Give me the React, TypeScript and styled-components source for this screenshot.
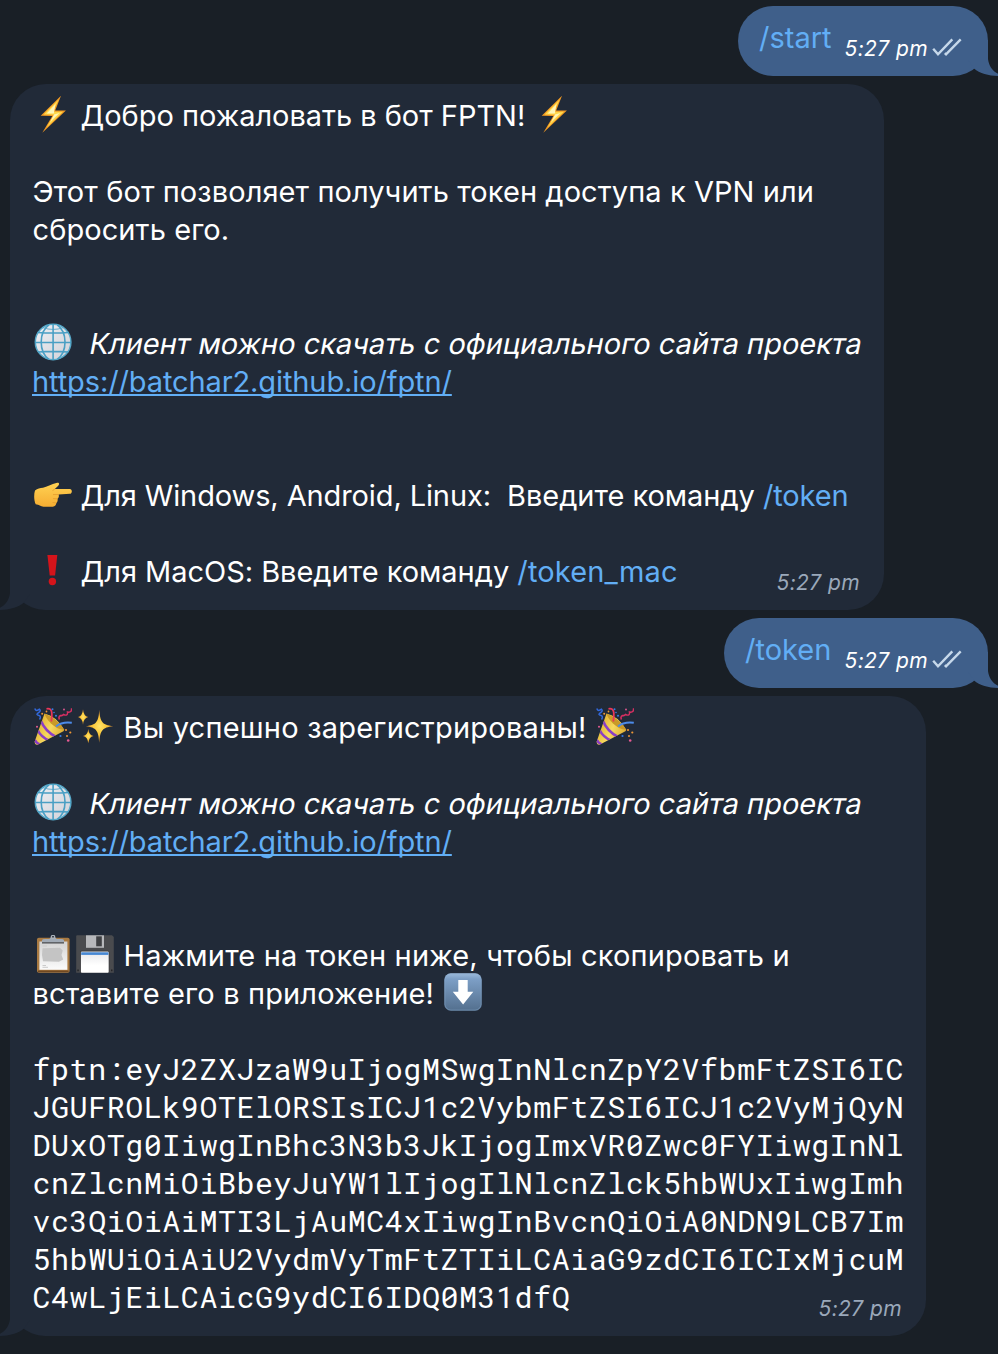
import React from 'react';
import styled, { createGlobalStyle } from 'styled-components';

const GlobalStyle = createGlobalStyle`
  body {
    margin: 0;
    background: #191f26;
  }
`;

const Chat = styled.main`
  box-sizing: border-box;
  display: flex;
  flex-direction: column;
  gap: 8px;
  width: 998px;
  height: 1354px;
  padding: 6px 10px 0;
  overflow: hidden;
  background: #191f26;
  color: #ffffff;
  font: 400 29px/38px Inter, 'Liberation Sans', sans-serif;
`;

const Incoming = styled.article<{ $width: number }>`
  position: relative;
  box-sizing: border-box;
  align-self: flex-start;
  width: ${(p) => p.$width}px;
  padding: 12px 22px 20px;
  border-radius: 36px 36px 36px 35px;
  background: #212a38;
`;

const Outgoing = styled.article<{ $width: number }>`
  position: relative;
  box-sizing: border-box;
  align-self: flex-end;
  display: flex;
  justify-content: space-between;
  width: ${(p) => p.$width}px;
  height: 70px;
  padding: 12px 26px 0 21px;
  border-radius: 35px;
  background: #3f5f8a;
`;

const TailShape = styled.svg<{ $side: 'left' | 'right' }>`
  position: absolute;
  bottom: 0;
  ${(p) => p.$side}: -12px;
  width: 40px;
  height: 36px;
  transform: ${(p) => (p.$side === 'left' ? 'scaleX(-1)' : 'none')};
`;

const Line = styled.div`
  position: relative;
  display: flex;
  height: 38px;
  white-space: pre;
`;

const Run = styled.span<{ $tracking?: number; $before?: number }>`
  margin-left: ${(p) => p.$before ?? 0}px;
  letter-spacing: ${(p) => p.$tracking ?? 0}px;
  line-height: 40px;
`;

const SlantedRun = styled(Run)`
  height: 40px;
  transform: skewX(-11deg);
  transform-origin: 0 30px;
`;

const Command = styled(Run)`
  color: #62aef5;
`;

const Link = styled.a`
  color: #62aef5;
  line-height: 40px;
  letter-spacing: -0.11px;
  text-decoration: underline;
  text-decoration-thickness: 2px;
  text-underline-offset: 2px;
  text-decoration-skip-ink: none;
`;

const Token = styled.code`
  display: block;
  margin-left: 0.5px;
  font: 400 30px/38px 'Roboto Mono', 'DejaVu Sans Mono', monospace;
  letter-spacing: 0.54px;
  white-space: pre;
`;

const Emoji = styled.svg<{ $before?: number }>`
  flex: none;
  width: 38px;
  height: 38px;
  margin: -1px 1.5px 0 ${(p) => p.$before ?? 2}px;
`;

const Time = styled.time`
  font-size: 21px;
  line-height: 26px;
  font-style: italic;
  letter-spacing: 0.4px;
  white-space: pre;
`;

const CornerTime = styled(Time)`
  position: absolute;
  right: 24px;
  bottom: 14px;
  color: #9aa8ba;
`;

const Status = styled.div`
  display: flex;
  align-items: flex-start;
  gap: 4px;
  padding-top: 18px;
`;

const Ticks = styled.svg`
  width: 30px;
  height: 19px;
  margin-top: 2px;
`;

function Tail({ side, color }: { side: 'left' | 'right'; color: string }) {
  return (
    <TailShape $side={side} viewBox="0 0 40 36" aria-hidden="true">
      <path d="M28 0V19C28.8 26 33 32 40 34.8V35.9C30 36 20 34 14 28.5L8 20V0Z" fill={color} />
    </TailShape>
  );
}

function Bolt({ before }: { before?: number }) {
  return (
    <Emoji $before={before} viewBox="0 0 38 38" aria-label="⚡">
      <path d="M27 .7 6.7 20.7 18.3 21 8.3 37.7 31.9 15.5 21.2 15.5Z" fill="#f39a22" />
      <path d="M24.8 4.2 9.6 19.5 20.2 19.7 12.5 32.6 29 16.8 19 16.7Z" fill="#ffd84b" />
      <path d="M21.5 9 12.7 18.5 19.8 18.6ZM20 19.5 16 27 25.5 18Z" fill="#fff6b8" />
    </Emoji>
  );
}

function Globe() {
  return (
    <Emoji viewBox="0 0 38 38" aria-label="🌐">
      <defs>
        <linearGradient id="globe" x1="0" y1="0" x2="1" y2="1">
          <stop offset="0" stopColor="#f0f0f4" />
          <stop offset="1" stopColor="#cfd1d8" />
        </linearGradient>
      </defs>
      <circle cx="19.1" cy="19" r="17.8" fill="url(#globe)" stroke="#57a9c9" strokeWidth="1.5" />
      <g fill="none" stroke="#4a9fc4" strokeWidth="1.6">
        <path d="M19.1 1V37M1 19.5H37M3.5 9.5Q19 10.5 34.7 9.5M4 29Q19 27.7 34.3 29" />
        <path d="M15 1.8C4.6 9 4.6 29 15 36.3M23.2 1.8C33.6 9 33.6 29 23.2 36.3" />
        <path d="M9 4.7Q19 8.2 29.2 4.7" strokeWidth=".8" />
      </g>
    </Emoji>
  );
}

function PointRight() {
  return (
    <Emoji viewBox="0 0 38 38" aria-label="👉">
      <defs>
        <linearGradient id="hand" x1="0" y1="0" x2="0" y2="1">
          <stop offset="0" stopColor="#ffd253" />
          <stop offset="1" stopColor="#f6ad32" />
        </linearGradient>
      </defs>
      <path
        d="M1 15.5C3.5 13.8 6 13.2 9 12.8C13 11.8 17 9.5 23.2 7.8C25.6 7.6 25.5 9.8 24 11L20.8 14.1H35.8C38.5 14.2 38.5 18.5 35.8 18.8L24.5 19.5C25.3 21 24.8 23 23.5 23.8C24 25.5 23.3 27.3 22.3 27.9C22.4 30 21 31.5 18.8 31.7H9.5C6.5 31.4 5.3 29.8 1.7 29.2C-.2 25 -.2 19.5 1 15.5Z"
        fill="url(#hand)"
      />
      <path d="M24.5 19.5 19 19.6M23.5 23.8 19 23.6M22.3 27.9 18.5 27.5M20.8 14.1 18.5 15.6" fill="none" stroke="#e39c2d" strokeWidth=".8" />
    </Emoji>
  );
}

function Exclamation() {
  return (
    <Emoji viewBox="0 0 38 38" aria-label="❗">
      <path d="M13.4 4H23.3L21.1 24.4H15.7Z" fill="#d4141b" />
      <circle cx="18.4" cy="30.5" r="3.7" fill="#d4141b" />
    </Emoji>
  );
}

function Party({ before }: { before?: number }) {
  return (
    <Emoji $before={before} viewBox="0 0 38 38" aria-label="🎉">
      <defs>
        <linearGradient id="cone" x1="0" y1=".3" x2="1" y2=".8">
          <stop offset="0" stopColor="#d9a521" />
          <stop offset=".45" stopColor="#f7d95f" />
          <stop offset="1" stopColor="#c98f16" />
        </linearGradient>
        <clipPath id="coneEdge">
          <path d="M10.5 6.5Q22 9 30.3 22.7Q30 24.5 27.5 25.3L4 37.5Q.5 38.5.6 34.8Z" />
        </clipPath>
      </defs>
      <g clipPath="url(#coneEdge)">
        <path d="M0 0H38V38H0Z" fill="url(#cone)" />
        <path d="M7 14Q11 24 22 30M3.6 23Q7 30 15 33.5M0 32Q2 36 7 38" fill="none" stroke="#8b3fc4" strokeWidth="2.6" />
        <path d="M10.5 6.5Q24 12 30.3 22.7Q24 23 17 16.5Q11.5 11 10.5 6.5Z" fill="#c99a28" />
      </g>
      <path d="M.8 1.5Q2 5 5.5 2.2Q7.5 4 4 6Q1.5 7.8 5 8.5Q7.5 9.2 5.5 12.5" fill="none" stroke="#3269dc" strokeWidth="1.5" />
      <path d="M12.5 1.8Q17.5.8 17.8 6Q18 10 17.3 14.5" fill="none" stroke="#ea3658" strokeWidth="1.8" />
      <path d="M37.5 1.2Q38 6 33.5 5Q34 9.5 29.5 7.5Q28.5 9 26.5 8.5Q24 10 25.5 12.5" fill="none" stroke="#d52f61" strokeWidth="1.5" />
      <path d="M22 19.5Q28 14.5 37.8 15.8" fill="none" stroke="#4c8be9" strokeWidth="1.9" />
      <g fill="#357be5">
        <circle cx="18.5" cy="2.2" r="1" />
        <circle cx="22" cy="8.7" r="1" />
        <circle cx="26.5" cy="29" r="1.1" />
        <circle cx="20" cy="5.5" r=".8" />
      </g>
      <g fill="#ef9735">
        <circle cx="32" cy="23" r="1.1" />
        <circle cx="36.3" cy="25.5" r="1.1" />
        <circle cx="33" cy="29" r="1" />
        <circle cx="8.2" cy="6.7" r="1" />
        <circle cx="12.5" cy="4.5" r=".9" />
      </g>
      <g fill="#e65a94">
        <circle cx="34.2" cy="33.5" r="1.3" />
        <circle cx="3" cy="19.7" r="1" />
        <circle cx="30" cy="2.5" r=".9" />
      </g>
    </Emoji>
  );
}

function Sparkles() {
  return (
    <Emoji viewBox="0 0 38 38" aria-label="✨">
      <defs>
        <radialGradient id="spark">
          <stop offset="0" stopColor="#ffe46a" />
          <stop offset=".45" stopColor="#fbc93c" />
          <stop offset="1" stopColor="#d98b2b" />
        </radialGradient>
      </defs>
      <g fill="url(#spark)">
        <path d="M23.3 2.8C24.2 15 26 18 37.3 19.2C26 20.4 24.2 23.5 23.3 35.8C22.4 23.5 20.6 20.4 9.8 19.2C20.6 18 22.4 15 23.3 2.8Z" />
        <path d="M7 2.2Q7.5 9 12.2 9.9Q7.5 11 7 17.7Q6.5 11 2 9.9Q6.5 9 7 2.2Z" />
        <path d="M12.3 22Q12.8 28 17.5 29Q12.8 30 12.3 36.3Q11.8 30 7 29Q11.8 28 12.3 22Z" />
      </g>
    </Emoji>
  );
}

function Clipboard() {
  return (
    <Emoji viewBox="0 0 38 38" aria-label="📋">
      <defs>
        <linearGradient id="paper" x1="0" y1="0" x2="0" y2="1">
          <stop offset="0" stopColor="#d3d3d3" />
          <stop offset="1" stopColor="#fbfbfb" />
        </linearGradient>
      </defs>
      <rect x="3" y="2.8" width="32.6" height="35" rx="1.8" fill="#a97a42" />
      <path d="M4 35.5H34.6V37H4Z" fill="#704821" />
      <rect x="5.4" y="6.5" width="28" height="28.3" fill="url(#paper)" />
      <path d="M8.5 11H13M8.5 30.5H12M8.5 32.3H14" stroke="#cbcbcb" strokeWidth="1" />
      <path d="M8.5 13.3 26 12.8 28.7 15.5 27.5 20 29.2 24.5 25 26.8 9 26.3 8 20Z" fill="#c4c4c4" />
      <path d="M8 7.5V5.2Q8.2 4 11 4H14.5Q16.2 4 16.3 2.4H21.7Q21.8 4 23.5 4H27Q29.8 4 30 5.2V7.5Z" fill="#a2abb6" />
      <path d="M8 7.2H30V8.5H8Z" fill="#4b4d51" />
      <circle cx="19" cy="2" r="1.7" fill="none" stroke="#aab2bb" strokeWidth="1.2" />
    </Emoji>
  );
}

function Floppy() {
  return (
    <Emoji viewBox="0 0 38 38" aria-label="💾">
      <defs>
        <linearGradient id="label" x1="0" y1="0" x2="0" y2="1">
          <stop offset="0" stopColor="#e6e6ea" />
          <stop offset=".65" stopColor="#ffffff" />
        </linearGradient>
      </defs>
      <path d="M.8.3H36L37.8 2V37.7H.2V.9Z" fill="#4a4b4e" />
      <rect x="10" y=".3" width="18" height="12.5" fill="#b7b8bb" />
      <rect x="20.2" y="1.3" width="5.6" height="10" fill="#3f4043" />
      <rect x="4.3" y="15.7" width="29" height="22" rx="1.2" fill="#323336" />
      <rect x="4.9" y="16.5" width="27.8" height="21.2" rx=".9" fill="url(#label)" />
      <path d="M5.2 17.3H32.4V19.9H5.2Z" fill="#4687d3" />
      <path d="M1.3 34.5H2.8V36.3H1.3ZM35 34.5H36.5V36.3H35Z" fill="#242528" />
    </Emoji>
  );
}

function ArrowDown({ before }: { before?: number }) {
  return (
    <Emoji $before={before} viewBox="0 0 38 38" aria-label="⬇️">
      <defs>
        <linearGradient id="key" x1="0" y1="0" x2="0" y2="1">
          <stop offset="0" stopColor="#9dbbdc" />
          <stop offset=".15" stopColor="#7d9fc6" />
          <stop offset="1" stopColor="#536f8e" />
        </linearGradient>
      </defs>
      <rect x=".3" y=".3" width="37.4" height="37.4" rx="6.5" fill="url(#key)" />
      <rect x=".9" y=".9" width="36.2" height="36.2" rx="6" fill="none" stroke="#8baccf" strokeOpacity=".45" />
      <path d="M14.3 7H23.7V18.8H29.3L19.1 31.4 8.8 18.8H14.3Z" fill="#ffffff" />
    </Emoji>
  );
}

function CommandMessage({ command, width }: { command: string; width: number }) {
  return (
    <Outgoing $width={width}>
      <Tail side="right" color="#3f5f8a" />
      <Command>{command}</Command>
      <Status>
        <Time>5:27 pm</Time>
        <Ticks viewBox="0 0 30 19" aria-label="Read">
          <path d="M1.2 10.7 6 16.3 20.3 1.3M12.8 15.2 14 16.3 28.7 1.3" fill="none" stroke="#c6d8ea" strokeWidth="2.4" />
        </Ticks>
      </Status>
    </Outgoing>
  );
}

function ClientSite() {
  return (
    <>
      <Line>
        <Globe />
        <SlantedRun $before={14} $tracking={0}>Клиент можно скачать с официального сайта проекта</SlantedRun>
      </Line>
      <Line>
        <Link>https://batchar2.github.io/fptn/</Link>
      </Line>
    </>
  );
}

const tokenLines = [
  'fptn:eyJ2ZXJzaW9uIjogMSwgInNlcnZpY2VfbmFtZSI6IC',
  'JGUFROLk9OTElORSIsICJ1c2VybmFtZSI6ICJ1c2VyMjQyN',
  'DUxOTg0IiwgInBhc3N3b3JkIjogImxVR0Zwc0FYIiwgInNl',
  'cnZlcnMiOiBbeyJuYW1lIjogIlNlcnZlck5hbWUxIiwgImh',
  'vc3QiOiAiMTI3LjAuMC4xIiwgInBvcnQiOiA0NDN9LCB7Im',
  '5hbWUiOiAiU2VydmVyTmFtZTIiLCAiaG9zdCI6ICIxMjcuM',
  'C4wLjEiLCAicG9ydCI6IDQ0M31dfQ',
];

export default function App() {
  return (
    <>
      <GlobalStyle />
      <Chat>
        <CommandMessage command="/start" width={250} />

        <Incoming $width={874}>
          <Tail side="left" color="#212a38" />
          <Line>
            <Bolt />
            <Run $before={7} $tracking={-0.03}>Добро пожаловать в бот FPTN!</Run>
            <Bolt before={9.5} />
          </Line>
          <Line />
          <Line><Run $before={0.5} $tracking={0.08}>Этот бот позволяет получить токен доступа к VPN или</Run></Line>
          <Line><Run $before={0.5} $tracking={0.08}>сбросить его.</Run></Line>
          <Line />
          <Line />
          <ClientSite />
          <Line />
          <Line />
          <Line>
            <PointRight />
            <Run $before={7} $tracking={-0.11}>Для Windows, Android, Linux:  </Run>
            <Run $tracking={-0.04}>Введите команду </Run>
            <Command $tracking={-0.15}>/token</Command>
          </Line>
          <Line />
          <Line>
            <Exclamation />
            <Run $before={7} $tracking={-0.03}>Для MacOS: Введите команду </Run>
            <Command $tracking={0.15}>/token_mac</Command>
          </Line>
          <CornerTime>5:27 pm</CornerTime>
        </Incoming>

        <CommandMessage command="/token" width={264} />

        <Incoming $width={916}>
          <Tail side="left" color="#212a38" />
          <Line>
            <Party />
            <Sparkles />
            <Run $before={8.5} $tracking={0.22}>Вы успешно зарегистрированы!</Run>
            <Party before={9.5} />
          </Line>
          <Line />
          <ClientSite />
          <Line />
          <Line />
          <Line>
            <Clipboard />
            <Floppy />
            <Run $before={8.5} $tracking={0.17}>Нажмите на токен ниже, чтобы скопировать и</Run>
          </Line>
          <Line>
            <Run $before={0.5} $tracking={0.13}>вставите его в приложение!</Run>
            <ArrowDown before={10} />
          </Line>
          <Line />
          {tokenLines.map((line) => (
            <Token key={line}>{line}</Token>
          ))}
          <CornerTime>5:27 pm</CornerTime>
        </Incoming>
      </Chat>
    </>
  );
}
